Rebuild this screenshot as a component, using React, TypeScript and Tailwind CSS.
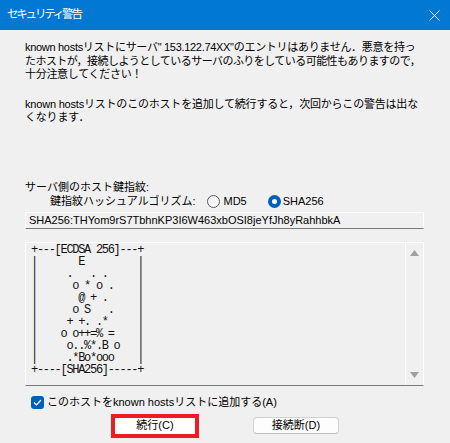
const art = [
  "+---[ECDSA 256]---+",
  "|       E         |",
  "|     .   . .     |",
  "|      o * o .    |",
  "|       @ + .     |",
  "|      o S   .    |",
  "|     + +. .*     |",
  "|    o o++=% =    |",
  "|     o..%*.B o   |",
  "|     .*Bo*ooo    |",
  "+----[SHA256]-----+",
]

export default function App() {
  return (
    <div className="w-[450px] h-[443px] bg-[#f0f0f0] text-[11px] text-black overflow-hidden font-['Liberation_Sans','Noto_Sans_CJK_JP',sans-serif]">
      <div className="h-[30px] bg-[#0078d4] flex items-center justify-between pl-[7px] pr-[10px] text-white">
        <span className="text-[11.5px] tracking-[-2.2px]">セキュリティ警告</span>
        <svg width="11" height="11" viewBox="0 0 11 11">
          <path d="M0.5 0.5 L10.5 10.5 M10.5 0.5 L0.5 10.5" stroke="white" strokeWidth="1" />
        </svg>
      </div>

      <div className="pl-[25px] pr-[26px]">
        <div className="pt-[11px] leading-[13.5px] whitespace-nowrap tracking-[-0.3px]">
          <div>known hostsリストにサーバ" 153.122.74XX"のエントリはありません．悪意を持っ</div>
          <div className="tracking-[-0.55px]">たホストが，接続しようとしているサーバのふりをしている可能性もありますので，</div>
          <div>十分注意してください！</div>
        </div>

        <div className="mt-[16px] leading-[13.5px] whitespace-nowrap tracking-[-0.2px]">
          <div>known hostsリストのこのホストを追加して続行すると，次回からこの警告は出な</div>
          <div>くなります．</div>
        </div>

        <div className="mt-[55px] leading-[14px]">サーバ側のホスト鍵指紋:</div>

        <div className="mt-[1px] ml-[25px] h-[14px] flex items-center">
          <span>鍵指紋ハッシュアルゴリズム:</span>
          <span className="ml-[11px] w-[13px] h-[13px] rounded-full border border-[#5a5a5a] bg-[#f7f7f7]" />
          <span className="ml-[4px]">MD5</span>
          <span className="ml-[21px] w-[13px] h-[13px] rounded-full bg-[#005fb8] flex items-center justify-center">
            <span className="w-[5px] h-[5px] rounded-full bg-white" />
          </span>
          <span className="ml-[2px]">SHA256</span>
        </div>

        <div className="mt-[3px] h-[17px] border border-white border-b-[#7a7a7a] flex items-center pl-[3px] leading-none">
          SHA256:THYom9rS7TbhnKP3I6W463xbOSI8jeYfJh8yRahhbkA
        </div>

        <div className="mt-[13px] h-[144px] border border-white border-b-[#7a7a7a] flex">
          <pre className="flex-1 pl-[5px] pt-[1px] text-[12px] leading-[12px] tracking-[-1.3px] font-['Liberation_Mono',monospace] text-[#111]">
            {art.join("\n")}
          </pre>
          <div className="w-[18px] border-l border-white flex flex-col items-center justify-between py-[7px]">
            <svg width="9" height="6" viewBox="0 0 9 6"><path d="M4.5 0 L9 6 L0 6 Z" fill="#a0a0a0" /></svg>
            <svg width="9" height="6" viewBox="0 0 9 6"><path d="M0 0 L9 0 L4.5 6 Z" fill="#a0a0a0" /></svg>
          </div>
        </div>

        <div className="mt-[10px] ml-[6px] h-[14px] flex items-center">
          <span className="w-[13px] h-[13px] rounded-[3px] bg-[#005fb8] flex items-center justify-center">
            <svg width="9" height="7" viewBox="0 0 9 7">
              <path d="M1 3.5 L3.5 6 L8 1" stroke="white" strokeWidth="1.2" fill="none" />
            </svg>
          </span>
          <span className="ml-[3px]">このホストをknown hostsリストに追加する(A)</span>
        </div>

        <div className="mt-[4px] flex items-center">
          <div className="ml-[86px] w-[88px] h-[24px] border-[4px] border-[#ed1c24] bg-white flex items-center justify-center">
            続行(C)
          </div>
          <div className="ml-[54px] w-[86px] h-[17px] rounded-[4px] border border-[#d0d0d0] border-b-[#bcbcbc] bg-[#fdfdfd] flex items-center justify-center">
            接続断(D)
          </div>
        </div>
      </div>
    </div>
  )
}
